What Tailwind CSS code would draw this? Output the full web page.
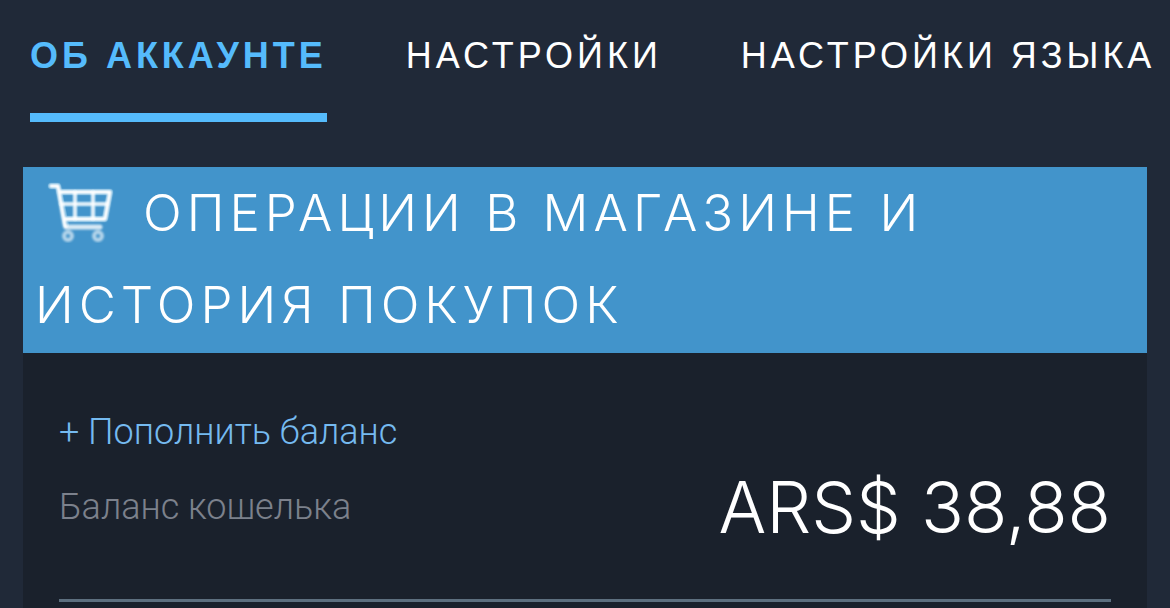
<!DOCTYPE html>
<html lang="ru">
<head>
<meta charset="utf-8">
<meta name="viewport" content="width=device-width, initial-scale=1">
<title>Об аккаунте</title>
<script src="https://cdn.jsdelivr.net/npm/@tailwindcss/browser@4"></script>
</head>
<body class="min-h-screen flex flex-col overflow-x-hidden bg-[#202938] font-['Liberation_Sans',sans-serif] text-white">
  <nav class="flex gap-[79px] px-[30px] mb-[45px] text-[36px] leading-[111px] tracking-[4px] whitespace-nowrap" aria-label="Разделы аккаунта">
    <a href="#account" aria-current="page" class="border-b-9 border-[#55bbfc] pb-[2px] font-bold text-[#55bbfc]">ОБ АККАУНТЕ</a>
    <a href="#settings">НАСТРОЙКИ</a>
    <a href="#language">НАСТРОЙКИ ЯЗЫКА</a>
  </nav>
  <main class="mx-[23px] flex grow flex-col bg-[#1a212c]">
    <h1 class="bg-[#4294cb] px-3 pb-[2px] font-['Inter',sans-serif] text-[51px] leading-[92px] font-light tracking-[5px]">
      <svg class="ml-3 mr-7 inline-block h-[62px] w-[68px] align-[-12px] text-white" viewBox="0 0 68 62" fill="none" stroke="currentColor" aria-hidden="true">
        <g stroke="#a5def5" stroke-opacity=".35" stroke-linejoin="round" stroke-linecap="round">
          <path d="M4 5H11L19 44M12 11H63L58 38H18" stroke-width="6"/>
          <path d="M14 23H60M28 11V38M46 11V38" stroke-width="5"/>
        </g>
        <g class="blur-[1px]">
          <path d="M4 5H11L18 45" stroke-width="4" stroke-linejoin="round" stroke-linecap="round"/>
          <path d="M13 11H63L58 38H17" stroke-width="4" stroke-linejoin="round"/>
          <path d="M15 23H60M28 11V38M46 11V38" stroke-width="3"/>
          <path d="M19 46H53" stroke-width="5" stroke-opacity=".8" stroke-linecap="round"/>
          <circle cx="21" cy="55" r="4" stroke-width="4" stroke-opacity=".6"/>
          <circle cx="51" cy="55" r="4" stroke-width="4" stroke-opacity=".6"/>
        </g>
      </svg>ОПЕРАЦИИ В МАГАЗИНЕ И ИСТОРИЯ ПОКУПОК
    </h1>
    <section class="mx-9 flex flex-col border-b-3 border-[#5d6f7f] pt-[42px] pb-[54px] font-['Roboto',sans-serif] text-[36px] leading-[75px] font-light" aria-label="Кошелёк">
      <a href="#add-funds" class="self-start text-[#75baf0]">+ Пополнить баланс</a>
      <div class="flex justify-between">
        <span class="text-[#7c818c]">Баланс кошелька</span>
        <span class="font-['Inter',sans-serif] text-[71px]">ARS$ 38,88</span>
      </div>
    </section>
  </main>
</body>
</html>
